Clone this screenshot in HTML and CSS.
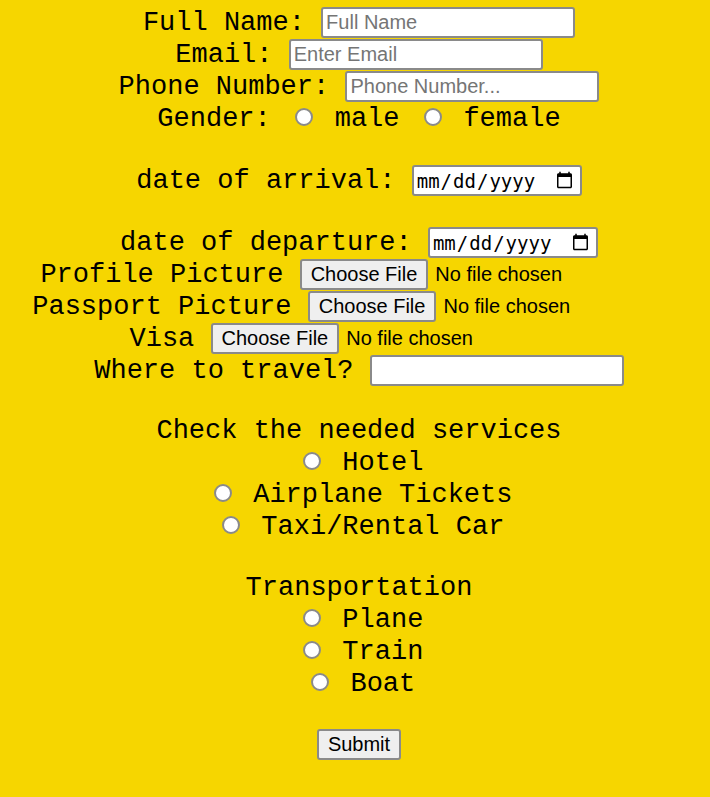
FILE: index.html
```html
<!DOCTYPE html>
<html lang="en">
<head>
<meta charset="utf-8">
<title>Travel Form</title>
<link rel="stylesheet" href="styles.css">
</head>
<body>
<form class="form">
  <div class="row">Full Name: <input type="text" class="field" placeholder="Full Name"></div>
  <div class="row">Email: <input type="email" class="field" placeholder="Enter Email"></div>
  <div class="row">Phone Number: <input type="tel" class="field" placeholder="Phone Number..."></div>
  <div class="row">Gender: <input type="radio" class="radio" name="gender"> male <input type="radio" class="radio" name="gender"> female</div>
  <div class="row gap-l">date of arrival: <input type="date" class="date"></div>
  <div class="row gap-l">date of departure: <input type="date" class="date"></div>
  <div class="row">Profile Picture <span class="file"><button type="button" class="btn">Choose File</button><span class="nofile">No file chosen</span></span></div>
  <div class="row">Passport Picture <span class="file"><button type="button" class="btn">Choose File</button><span class="nofile">No file chosen</span></span></div>
  <div class="row">Visa <span class="file"><button type="button" class="btn">Choose File</button><span class="nofile">No file chosen</span></span></div>
  <div class="row">Where to travel? <input type="text" class="field"></div>
  <div class="row gap-s">Check the needed services</div>
  <div class="row"><input type="radio" class="radio" name="svc1"> Hotel</div>
  <div class="row"><input type="radio" class="radio" name="svc2"> Airplane Tickets</div>
  <div class="row"><input type="radio" class="radio" name="svc3"> Taxi/Rental Car</div>
  <div class="row gap-m">Transportation</div>
  <div class="row"><input type="radio" class="radio" name="tr1"> Plane</div>
  <div class="row"><input type="radio" class="radio" name="tr2"> Train</div>
  <div class="row"><input type="radio" class="radio" name="tr3"> Boat</div>
  <div class="row gap-m"><button type="submit" class="btn">Submit</button></div>
</form>
</body>
</html>
```
FILE: styles.css
```css
body {
  margin: 0;
  background: #f6d600;
}

.form {
  padding: 7px 0 0 8px;
  font-family: "Liberation Mono", "Courier New", monospace;
  font-size: 27px;
  color: #000;
  text-align: center;
}

.row {
  height: 32px;
  line-height: 32px;
  white-space: nowrap;
}

.gap-l { margin-top: 30px; }
.gap-m { margin-top: 29px; }
.gap-s { margin-top: 28px; }

.field {
  box-sizing: border-box;
  width: 254px;
  height: 31px;
  margin: 0;
  padding: 0 3px;
  vertical-align: middle;
  font: 20px "Liberation Sans", Arial, sans-serif;
  color: #000;
  background: #fff;
  border: 2px solid #8a8a8a;
  border-radius: 3px;
}

.field::placeholder {
  color: #757575;
}

.date {
  box-sizing: border-box;
  width: 170px;
  height: 31px;
  margin: 0;
  padding: 0 4px 0 2px;
  vertical-align: middle;
  font: 19px "DejaVu Sans Mono", monospace;
  color: #000;
  background: #fff;
  border: 2px solid #8a8a8a;
  border-radius: 3px;
}

.radio {
  appearance: none;
  -webkit-appearance: none;
  box-sizing: border-box;
  width: 18px;
  height: 18px;
  margin: 0 5.5px 0 8px;
  vertical-align: baseline;
  background: #fff;
  border: 2px solid #8a8a8a;
  border-radius: 50%;
}

.btn {
  box-sizing: border-box;
  height: 31px;
  margin: 0;
  padding: 0 9px;
  vertical-align: middle;
  font: 20px "Liberation Sans", Arial, sans-serif;
  line-height: normal;
  color: #000;
  background: #efefef;
  border: 2px solid #8a8a8a;
  border-radius: 3px;
}

.file {
  display: inline-flex;
  align-items: center;
  width: 378px;
  height: 31px;
  vertical-align: middle;
  text-align: left;
  font: 20px "Liberation Sans", Arial, sans-serif;
  line-height: normal;
}

.nofile {
  margin-left: 7px;
}
```
